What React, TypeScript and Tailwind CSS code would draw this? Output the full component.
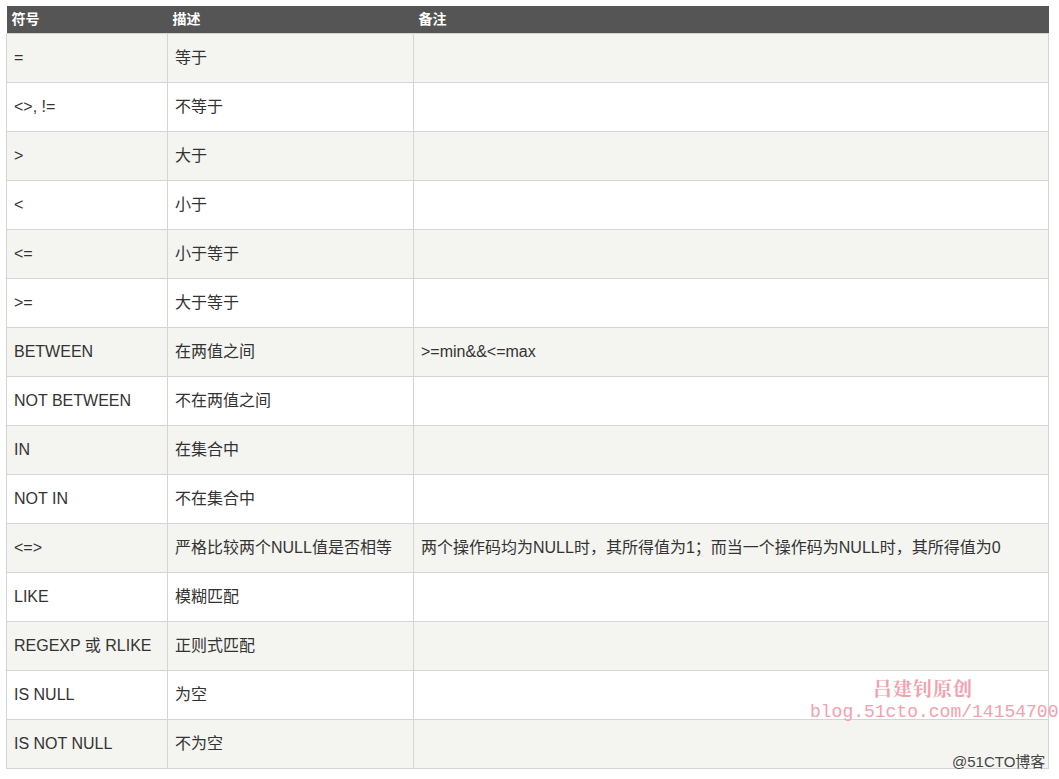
const ROWS: [string, string, string][] = [
  ['=', '等于', ''],
  ['<>, !=', '不等于', ''],
  ['>', '大于', ''],
  ['<', '小于', ''],
  ['<=', '小于等于', ''],
  ['>=', '大于等于', ''],
  ['BETWEEN', '在两值之间', '>=min&&<=max'],
  ['NOT BETWEEN', '不在两值之间', ''],
  ['IN', '在集合中', ''],
  ['NOT IN', '不在集合中', ''],
  ['<=>', '严格比较两个NULL值是否相等', '两个操作码均为NULL时，其所得值为1；而当一个操作码为NULL时，其所得值为0'],
  ['LIKE', '模糊匹配', ''],
  ['REGEXP 或 RLIKE', '正则式匹配', ''],
  ['IS NULL', '为空', ''],
  ['IS NOT NULL', '不为空', ''],
];

const FONT = "font-['Liberation_Sans','Noto_Sans_CJK_SC',sans-serif]";

export default function App() {
  return (
    <div className={`relative h-[779px] w-[1059px] overflow-hidden bg-white pl-[6px] pt-[6px] ${FONT}`}>
      <table className="w-[1043px] table-fixed border-collapse text-[16px] text-[#333]">
        <colgroup>
          <col className="w-[161px]" />
          <col className="w-[246px]" />
          <col />
        </colgroup>
        <thead>
          <tr className="h-[27px] bg-[#555] text-left text-[14px] font-bold text-white">
            <th className="px-[5px] font-bold">符号</th>
            <th className="px-[5px] font-bold">描述</th>
            <th className="px-[5px] font-bold">备注</th>
          </tr>
        </thead>
        <tbody>
          {ROWS.map(([sym, desc, note], i) => (
            <tr key={sym} className={`h-[49px] ${i % 2 === 0 ? 'bg-[#f4f4f0]' : 'bg-white'}`}>
              <td className="border border-[#d4d4d4] px-[7px]">{sym}</td>
              <td className="border border-[#d4d4d4] px-[7px]">{desc}</td>
              <td className="border border-[#d4d4d4] px-[7px]">{note}</td>
            </tr>
          ))}
        </tbody>
      </table>

      <div className="absolute left-[873px] top-[676px] font-['Noto_Serif_CJK_SC','Noto_Sans_CJK_SC',serif] text-[19px] font-bold leading-[24px] tracking-[1px] text-[#f4a0ae]">
        吕建钊原创
      </div>
      <div className="absolute left-[810px] top-[700px] font-['Liberation_Mono',monospace] text-[18px] leading-[24px] text-[#f4a0ae]">
        blog.51cto.com/14154700
      </div>
      <div className="absolute left-[952px] top-[753px] font-['Liberation_Sans','Noto_Sans_CJK_SC',sans-serif] text-[15px] leading-[18px] text-[#444] [text-shadow:0_0_2px_#fff]">
        @51CTO博客
      </div>
    </div>
  );
}
